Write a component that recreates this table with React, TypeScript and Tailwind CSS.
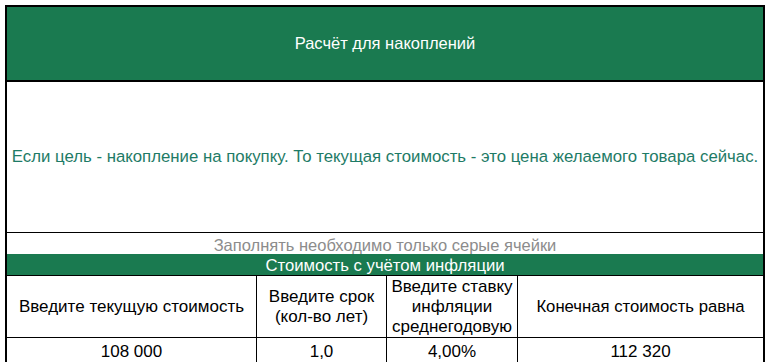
import React from "react";

export default function App() {
  return (
    <div
      className="w-[768px] h-[363px] overflow-hidden bg-white text-[17px]"
      style={{ fontFamily: '"Liberation Sans", Arial, sans-serif' }}
    >
      <div className="ml-[5px] mt-[5px] w-[760px] border-l-2 border-r-2 border-t-2 border-black">
        <div className="h-[73px] bg-[#1a7a50] flex items-center justify-center text-white text-[16.5px]">
          Расчёт для накоплений
        </div>
        <div className="border-b-2 border-black" />
        <div className="h-[151px] flex items-center justify-center text-[#1e7b66] border-b border-black whitespace-nowrap text-[16.8px]">
          Если цель - накопление на покупку. То текущая стоимость - это цена желаемого товара сейчас.
        </div>
        <div className="h-[21px] pt-[3px] flex items-center justify-center text-[#8c8c8c] leading-none text-[16.5px]">
          Заполнять необходимо только серые ячейки
        </div>
        <div className="h-[22px] pt-[3px] bg-[#1a7a50] flex items-center justify-center text-white leading-none border-b border-black text-[16.7px]">
          Стоимость с учётом инфляции
        </div>
        <div className="grid grid-cols-[250px_130px_131px_1fr] text-black">
          <div className="h-[62px] flex items-center justify-center text-center border-r border-b border-black leading-[20px]">
            Введите текущую стоимость
          </div>
          <div className="h-[62px] flex items-center justify-center text-center border-r border-b border-black leading-[20px]">
            Введите срок
            <br />
            (кол-во лет)
          </div>
          <div className="h-[62px] flex items-center justify-center text-center border-r border-b border-black leading-[20px]">
            Введите ставку
            <br />
            инфляции
            <br />
            среднегодовую
          </div>
          <div className="h-[62px] flex items-center justify-center text-center border-b border-black leading-[20px] text-[16.7px]">
            Конечная стоимость равна
          </div>
          <div className="h-[24px] pt-[3px] flex items-center justify-center border-r border-black">108 000</div>
          <div className="h-[24px] pt-[3px] flex items-center justify-center border-r border-black">1,0</div>
          <div className="h-[24px] pt-[3px] flex items-center justify-center border-r border-black">4,00%</div>
          <div className="h-[24px] pt-[3px] flex items-center justify-center">112 320</div>
        </div>
      </div>
    </div>
  );
}
